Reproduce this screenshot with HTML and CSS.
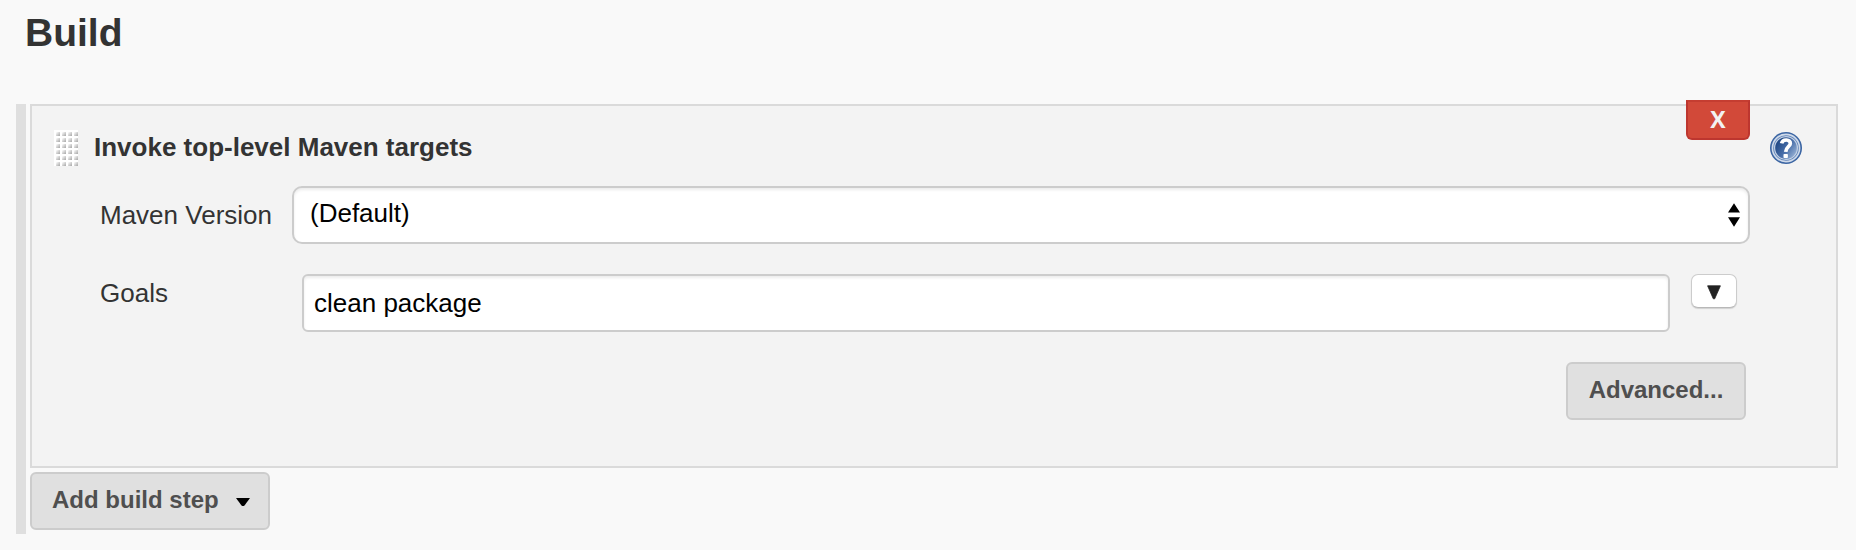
FILE: index.html
```html
<!DOCTYPE html>
<html lang="en">
<head>
<meta charset="utf-8">
<title>Build</title>
<link rel="stylesheet" href="styles.css">
</head>
<body>
<h1 class="heading">Build</h1>
<main class="steps">
  <section class="panel">
    <header class="panel-head">
      <span class="grip"></span>
      <h2 class="title">Invoke top-level Maven targets</h2>
      <svg class="help" width="32" height="32" viewBox="0 0 32 32" aria-label="Help">
        <defs>
          <linearGradient id="disc" x1="0" y1="0.15" x2="1" y2="0.85">
            <stop offset="0.1" stop-color="#1f4784"/>
            <stop offset="0.55" stop-color="#4a70aa"/>
            <stop offset="1" stop-color="#a3bbdb"/>
          </linearGradient>
        </defs>
        <circle cx="16" cy="16" r="16" fill="#3b65a3"/>
        <circle cx="16" cy="16" r="13.6" fill="#5f83b8" stroke="#cfdaea" stroke-width="1.6"/>
        <circle cx="16" cy="16" r="11.4" fill="url(#disc)" stroke="#c3d1e5" stroke-width="1.2"/>
        <path d="M11.6 11.4C12.2 8.9 14 7.9 16.4 8C19 8.1 20.5 9.5 20.3 11.7C20.1 14.5 15.9 14.9 15.7 19.8" fill="none" stroke="#fff" stroke-width="3.7"/>
        <rect x="13.5" y="22" width="4.4" height="4" rx="0.8" fill="#fff"/>
      </svg>
      <button class="delete">X</button>
    </header>
    <div class="row">
      <span class="label">Maven Version</span>
      <div class="select">
        <span>(Default)</span>
        <svg width="12" height="24" viewBox="0 0 12 24"><path d="M0 9.5L6 0.3L12 9.5ZM0 14.3H12L6 23.7Z" fill="#000"/></svg>
      </div>
    </div>
    <div class="row">
      <span class="label goals-label">Goals</span>
      <div class="input">clean package</div>
      <button class="expand" aria-label="Expand"><svg width="14" height="15" viewBox="0 0 14 15"><path d="M0.6 0.8H13.4L7.7 13.8H6.3Z" fill="#222" stroke="#222" stroke-width="0.8" stroke-linejoin="round"/></svg></button>
    </div>
    <div class="actions"><button class="button">Advanced...</button></div>
  </section>
  <button class="button add">Add build step<svg width="14" height="8" viewBox="0 0 14 8"><path d="M0 0H14L8.5 7.4Q7 8.6 5.5 7.4Z" fill="#000"/></svg></button>
</main>
</body>
</html>
```
FILE: styles.css
```css
* {
  box-sizing: border-box;
}

body {
  margin: 0;
  height: 550px;
  overflow: hidden;
  background: #f9f9f9;
  color: #333;
  font: 26px/36px "Liberation Sans", Arial, sans-serif;
}

button {
  margin: 0;
  padding: 0;
  font-family: inherit;
}

svg {
  display: block;
  flex: none;
}

.heading {
  margin: 0 0 39px 25px;
  font-size: 39px;
  line-height: 65px;
}

.steps {
  display: flex;
  flex-direction: column;
  gap: 4px;
  width: 1822px;
  height: 430px;
  margin-left: 16px;
  padding-left: 4px;
  border-left: 10px solid #dfdfdf;
}

.panel {
  position: relative;
  display: flex;
  flex-direction: column;
  gap: 30px;
  height: 364px;
  border: 2px solid #dadada;
  background: #f3f3f3;
}

.panel-head {
  display: flex;
  align-items: center;
  height: 80px;
  margin-bottom: -30px;
  padding: 0 34px 0 22px;
}

.grip {
  width: 24px;
  height: 36px;
  margin-top: 4px;
  background:
    linear-gradient(90deg, #fff 1.5px, transparent 2.5px) 0 0 / 6px 6px,
    linear-gradient(#fff 1.5px, transparent 2.5px) 0 0 / 6px 6px,
    linear-gradient(135deg, #fff 35%, #b2b2b2 90%) 0 0 / 6px 6px;
}

.title {
  flex: 1;
  margin: 2px 0 0 16px;
  font-size: 26px;
}

.help {
  margin-top: 4px;
}

.delete {
  position: absolute;
  top: -6px;
  right: 86px;
  width: 64px;
  height: 40px;
  padding-bottom: 2px;
  border: 2px solid #bd362f;
  border-top-color: #c53d31;
  border-radius: 0 0 6px 6px;
  background: #d24939;
  color: #f2f2f2;
  font: bold 23px/34px "Open Sans", sans-serif;
}

.row {
  display: flex;
  align-items: flex-start;
  height: 58px;
  padding-left: 68px;
}

.label {
  width: 192px;
  line-height: 58px;
}

.goals-label {
  width: 202px;
  line-height: 38px;
}

.select,
.input {
  height: 58px;
  border: 2px solid #ccc;
  background: #fff;
  color: #000;
  box-shadow: inset 0 2px 3px rgba(0, 0, 0, 0.08);
}

.select {
  display: flex;
  align-items: center;
  justify-content: space-between;
  width: 1458px;
  padding: 0 8px 0 16px;
  border-radius: 10px;
}

.select span {
  margin-top: -4px;
}

.input {
  width: 1368px;
  padding-left: 10px;
  border-radius: 6px;
  line-height: 54px;
}

.expand {
  display: flex;
  justify-content: center;
  width: 46px;
  height: 34px;
  margin-left: 21px;
  padding-top: 10px;
  border: 1px solid #ccc;
  border-bottom-color: #b8b8b8;
  border-radius: 7px;
  background: #fff;
  box-shadow: 0 1px 1px rgba(0, 0, 0, 0.14);
}

.actions {
  display: flex;
  justify-content: flex-end;
  padding-right: 90px;
}

.button {
  width: 180px;
  height: 58px;
  padding-bottom: 3px;
  border: 2px solid #ccc;
  border-radius: 6px;
  background: #e0e0e0;
  color: #4f4f4f;
  font-size: 24px;
  font-weight: bold;
}

.add {
  display: flex;
  align-items: center;
  gap: 17px;
  width: 240px;
  padding-left: 20px;
}

.add svg {
  margin-top: 5px;
}
```
